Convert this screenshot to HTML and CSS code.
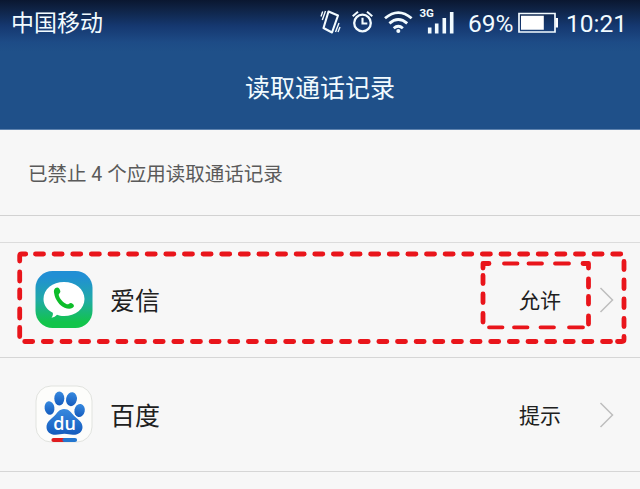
FILE: index.html
```
<!DOCTYPE html>
<html lang="zh-CN">
<head>
<meta charset="utf-8">
<title>读取通话记录</title>
<link rel="stylesheet" href="styles.css">
</head>
<body>
<header class="header">
  <div class="status">
    <span class="carrier">中国移动</span>
    <div class="indicators">
      <svg class="signals" width="138" height="36" viewBox="318 0 138 36" fill="none" stroke="#f2fbff">
        <path d="M328.500 11.500l9.500 4-6 17-8.500-4.500z" stroke-width="2.100" stroke-linejoin="round"/>
        <path d="M325.500 11l-3.200 9M322.700 11.500l-1.700 5M335.500 32l3.500-9M338 32l2-5" stroke-width="1.400"/>
        <circle cx="362.500" cy="23" r="8.300" stroke-width="2.300"/>
        <path d="M362.500 17.800v5.700h4.800" stroke-width="2.100"/>
        <path d="M352.700 16.300l5.300-4.600M372.300 16.300l-5.300-4.600" stroke-width="2"/>
        <path d="M385 18.300q13.300-11.400 26.600 0M389.400 23.400q8.900-7.800 17.800 0M393.700 28.200q4.600-4 9.200 0" stroke-width="2.800"/>
        <circle cx="398.300" cy="31" r="2" fill="#f2fbff" stroke="none"/>
        <path d="M429.700 33.500v-6M436.700 33.500v-10M444.300 33.500v-15.500M451.700 33.500v-21.500" stroke-width="3.600"/>
        <text class="network" x="419.500" y="17">3G</text>
      </svg>
      <span class="percent">69%</span>
      <svg class="battery" width="41" height="22" viewBox="0 0 41 22" fill="none">
        <path d="M1 1.500h36v18.500H1z" stroke="#f2fbff" stroke-width="1.700"/>
        <path d="M3 3.700h22.800v14h-22.800zM37.500 6h2.500v9.500h-2.500z" fill="#fff"/>
      </svg>
      <time class="clock">10:21</time>
    </div>
  </div>
  <h1 class="title">读取通话记录</h1>
</header>
<main>
  <p class="summary">已禁止 4 个应用读取通话记录</p>
  <ul class="apps">
    <li class="app">
      <svg class="icon" width="58" height="58" viewBox="0 0 58 58">
        <defs><linearGradient id="sky" x2="0" y2="1"><stop offset=".1" stop-color="#218fd4"/><stop offset=".5" stop-color="#20aaa8"/><stop offset=".9" stop-color="#12c44b"/></linearGradient></defs>
        <rect x=".5" y="0" width="57" height="57" rx="17" fill="url(#sky)"/>
        <path d="M29 11c11.500 0 20.500 7.200 20.500 17s-9 17-20.500 17c-2.800 0-5-.4-7-1.200-1.400 1.600-3 2.600-5.500 3 1.200-1.700 1.700-3.300 1.300-5C12 38.800 8.500 34 8.500 28c0-9.800 9-17 20.500-17z" fill="#fff"/>
        <path d="M20.500 17c2.300-1.500 4.300.3 4.800 3 .4 2.300-1.800 2.400-1.500 4.200.8 3.600 4.600 7.500 8 9 1.700.8 2.800-1.900 4.800-1 2.800 1.200 3 3.400 1 4.600-2.100 1.500-5 1.200-8 0C24.600 34.600 20 28.500 19.200 22.500c-.7-2.300-.2-4.500 1.300-5.500z" fill="#0dbd2a"/>
      </svg>
      <span class="name">爱信</span>
      <span class="state">允许</span>
      <svg class="chevron" width="16" height="28" viewBox="0 0 16 28"><path d="M1.500 2l12 12-12 12"/></svg>
    </li>
    <li class="app">
      <svg class="icon" width="58" height="58" viewBox="0 0 58 58">
        <defs><linearGradient id="paw" x2="0" y2="1"><stop stop-color="#3789df"/><stop offset="1" stop-color="#145bbd"/></linearGradient></defs>
        <rect x="1" y="1" width="56" height="56" rx="15" fill="#fdfdfb" stroke="#e1e3df"/>
        <g fill="url(#paw)">
          <ellipse cx="14.500" cy="23" rx="4.900" ry="6.800" transform="rotate(-8 14.500 23)"/>
          <ellipse cx="24.300" cy="13.500" rx="5" ry="7"/>
          <ellipse cx="36.500" cy="14.200" rx="5.400" ry="7" transform="rotate(12 36.500 14.200)"/>
          <ellipse cx="44.600" cy="25.500" rx="5.200" ry="6.600" transform="rotate(12 44.600 25.500)"/>
          <path d="M29 24c5 0 7.300 3.700 10 6.700 3.500 3.400 8.500 6 8.500 11.300 0 5-4 8-9.500 7.800-3.500-.2-5-1-8.500-1s-5.500 1-9 1c-5.300 0-9-3-9-7.800 0-5.200 4.500-7.500 8-11.200 2.700-3 5-6.800 9.500-6.800z"/>
        </g>
        <text class="du" x="29.500" y="45">du</text>
        <path d="M18.500 55H29" stroke="#df1c20" stroke-width="4.200" stroke-linecap="round"/>
        <path d="M29.500 55H40" stroke="#2376cf" stroke-width="4.200" stroke-linecap="round"/>
      </svg>
      <span class="name">百度</span>
      <span class="state">提示</span>
      <svg class="chevron" width="16" height="28" viewBox="0 0 16 28"><path d="M1.500 2l12 12-12 12"/></svg>
    </li>
  </ul>
</main>
<svg class="highlight" width="612" height="94" viewBox="16 251 612 94">
  <g stroke-width="4.800">
    <path d="M19.700 261v-5q0-2 2-2h4M622 341.500q2 0 2-2v-3M617.500 341.500h4.500"/>
    <path d="M35.500 254H623" stroke-dasharray="8 10.620"/>
    <path d="M24.700 341.500H613" stroke-dasharray="8 10.640"/>
    <path d="M19.700 272v9M19.700 290v8M19.700 309v9M19.700 327.500v9M624 261.500v8M624 280v8.500M624 299v8.500M624 318.500v8"/>
    <path d="M483 268v-4.500h6M583 263.500h5.500v4.500M483 275.500v8M483 294v8.500M483 313.500v8.500M588.500 279v8M588.500 296.500v7.500M588.500 316v8"/>
  </g>
  <path stroke-width="3.800" d="M504 263.500h13.500M528.500 263.500H542M555 263.500h14M489 327.300h13.500M514 327.300h13.500M540.500 327.300H554M569 327.300h14"/>
</svg>
</body>
</html>
```
FILE: styles.css
```
* { box-sizing: border-box; }
body {
  margin: 0;
  height: 489px;
  overflow: hidden;
  position: relative;
  background: #f7f7f7;
  color: #202020;
  font-family: Roboto, "Noto Sans CJK SC", sans-serif;
}
.header {
  height: 130px;
  background: linear-gradient(#0a1730 0, #0f2447 10px, #153870 26px, #1d4b86 42px, #1f5089 52px, #1f5089 100%);
  border-bottom: 1px solid #5f83ae;
  color: #f2fbff;
}
.status {
  height: 46px;
  padding: 0 14px 0 11px;
  display: flex;
  justify-content: space-between;
  align-items: center;
}
.carrier { font-size: 23px; line-height: 46px; padding-top: 1px; }
.indicators { display: flex; align-items: center; height: 46px; }
.signals { margin: 0 12px 10px 0; }
.network { font: 700 11.500px Roboto, sans-serif; fill: #f2fbff; stroke: none; }
.percent { font-size: 24.500px; width: 50px; line-height: 46px; padding-top: 1px; }
.battery { margin-right: 7px; }
.clock { width: 60px; font-size: 24.500px; line-height: 46px; padding-top: 1px; white-space: nowrap; }
.title {
  margin: 0;
  font-size: 25px;
  font-weight: 400;
  line-height: 86px;
  text-align: center;
}
.summary {
  margin: 0;
  height: 86px;
  padding-left: 28px;
  border-bottom: 1px solid #d2d2d2;
  font-size: 19.500px;
  line-height: 89px;
  color: #5a5a5a;
}
.apps {
  list-style: none;
  margin: 26px 0 0;
  padding: 0;
  border-top: 1px solid #dcdcdc;
}
.app {
  display: flex;
  align-items: center;
  height: 114.500px;
  padding: 0 25px 0 35px;
  border-bottom: 1px solid #d6d6d6;
}
.icon { flex: none; margin-right: 17px; }
.name { flex: 1; font-size: 25px; padding-bottom: 1px; }
.state { font-size: 21px; margin-right: 38px; padding-bottom: 1px; }
.chevron { fill: none; stroke: #bdbdbd; stroke-width: 1.500; margin-top: 1px; }
.du { font: 600 18px "Open Sans", sans-serif; fill: #fff; text-anchor: middle; }
.highlight {
  position: absolute;
  left: 16px;
  top: 251px;
  fill: none;
  stroke: #e9151b;
  stroke-linecap: round;
  stroke-linejoin: round;
}
```
